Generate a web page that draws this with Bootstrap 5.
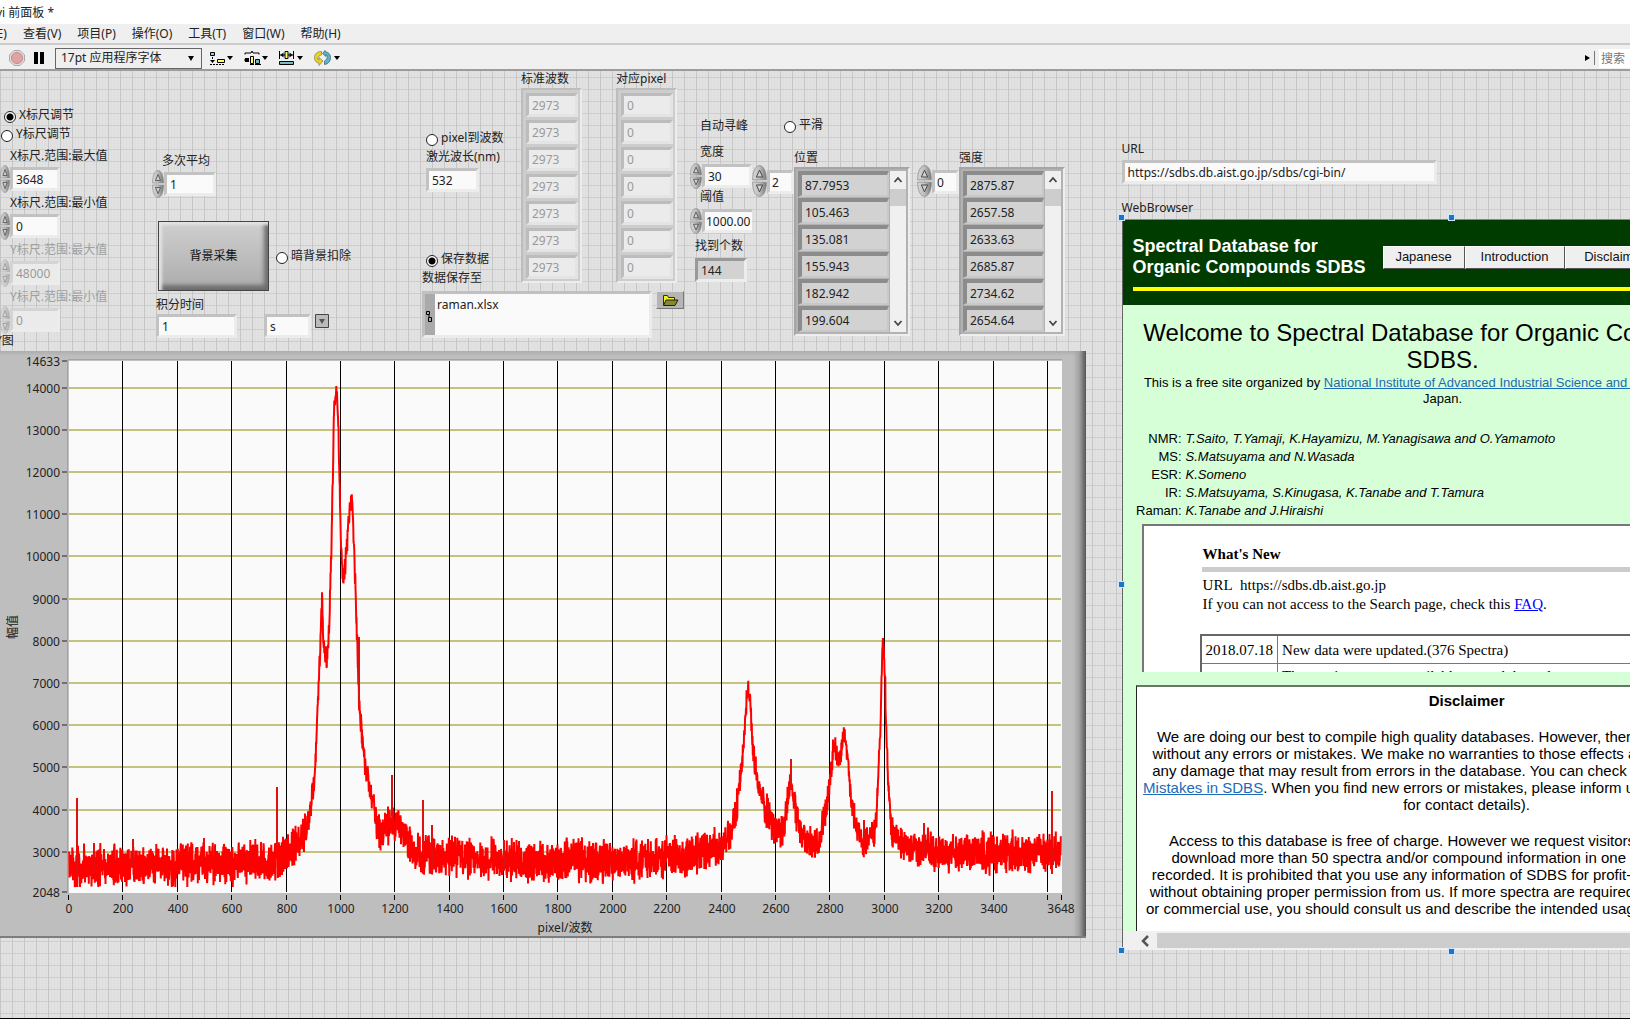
<!DOCTYPE html>
<html lang="zh-CN">
<head>
<meta charset="utf-8">
<meta name="viewport" content="width=device-width, initial-scale=1">
<title>vi 前面板</title>
<link href="https://cdn.jsdelivr.net/npm/bootstrap@5.3.0/dist/css/bootstrap.min.css" rel="stylesheet">
<style>
body{font:12px/18px "Noto Sans","Noto Sans CJK SC",sans-serif;color:#222;background:#e1e1e1;overflow:hidden}
.app{min-height:100vh;border-bottom:1px solid #000}
.titlebar{height:24px;background:#fff;color:#222;padding-top:2px}
.titlebar span{margin-left:-4px}
.menubar{height:21px;background:#efefef;gap:16px;border-bottom:2px solid #cacaca}
.menubar a{color:#222;text-decoration:none;white-space:nowrap}
.menubar a:first-child{margin-left:-31px}
.toolstrip{height:26px;padding-top:2px;background:#f0f0f0;border-bottom:2px solid #9c9c9c;gap:11px}
.toolstrip button,.plain{border:0;padding:0;background:none;line-height:0;flex:none}
.fontbox{width:147px;height:21px;border:1px solid #666;background:#efefef;padding:0 5px;font-size:12px;appearance:none;color:#222}
.fontwrap{position:relative;margin-right:-4px}
.fontwrap svg{position:absolute;right:8px;top:8px}
.find{width:31px;height:19px;border:0;background:#fff;padding:0 2px;font-size:12px}
.find::placeholder{color:#777;opacity:1}
.canvas{flex:1;background-color:#e2e2e2;
 background-image:linear-gradient(90deg,#c5c5c5 1px,transparent 1px),linear-gradient(#cdcdcd 1px,transparent 1px),linear-gradient(90deg,#dedede 1px,transparent 1px),linear-gradient(#e0e0e0 1px,transparent 1px);
 background-size:12px 12px,12px 12px,3px 3px,3px 3px;background-position:0 0,0 6px,0 0,0 0}
.leftpane{flex:none;width:66.6%;min-width:0}
.rightpane{flex:1;min-width:0;padding:69px 0 0 36px}
.controls{height:280px}
.controls>div{flex:none}
.controls label,.tag{display:block;height:18px;line-height:18px;white-space:nowrap}
.controls .fld label{margin-left:10px}
.lv{height:24px;border:3px solid;border-color:#c2c2c2 #ececec #ececec #c2c2c2;background:#fafafa;color:#222;padding:0 3px;font-size:12px;line-height:18px;border-radius:0;min-width:0;display:block}
.lv:disabled{background:#ebebeb;color:#999;border-color:#d4d4d4 #ececec #ececec #d4d4d4;opacity:1}
.dim{color:#a0a0a0}
.dim svg{opacity:.5}
.ind{background:#d2d2d2;border-color:#999 #ededed #ededed #999}
.pick{height:19px;gap:3px}
.pick input{appearance:none;width:12px;height:12px;border:1px solid #222;border-radius:50%;background:#fff;margin:5px 0 0;flex:none}
.pick input:checked{background:radial-gradient(#000 0 3px,#fff 4px)}
.fld{margin-top:3px}
.fld>div{margin-top:2px}
.fld svg{margin:-2px 0;flex:none}
.stackA{width:152px;padding-top:35px}
.stackA .pick{padding-left:1px}
.stackA .lv{width:50px}
.graphname{margin-left:-5px}
.stackB{width:270px;padding-top:81px}
.bigbtn{flex:none;width:111px;height:70px;border:1px solid #444;border-radius:0;padding:0;color:#111;font-size:12px;
 background:linear-gradient(#cfcfcf,#acacac);box-shadow:inset 3px 3px 3px #e4e4e4,inset -4px -5px 4px #6d6d6d}
.bigrow{margin:25px 0 5px 6px;gap:7px}
.w51{width:52px}.w50{width:50px}
.lv.thr{padding:0 1px;border-right-width:0}
#it{width:81px;margin-right:27px}
.unit{width:47px;margin-right:4px}
.stackC{width:268px}
.laser{width:99px;padding-top:58px}
.nm{width:53px;margin-top:2px}
.saver{margin-top:58px}
.crow{height:220px}
.arrbox{width:61px;margin-top:-1px}
.second{margin-left:34px}
.arr{background:#cdcdcd;border:2px solid;border-color:#bdbdbd #ededed #ededed #bdbdbd;padding:3px 2px 2px 3px}
.arr .lv{height:24px;margin-bottom:3px}
.arr .lv:last-child{margin-bottom:0}
.arrbox .lv{width:51px;border-color:#bcbcbc #e4e4e4 #e4e4e4 #bcbcbc}
.filebox{width:230px;height:47px;border:3px solid;border-color:#c0c0c0 #ececec #ececec #c0c0c0;background:#fafafa}
.filebox span{width:10px;background:#aaa;flex:none}
.filebox textarea{border:0;resize:none;background:none;padding:3px 2px;font-size:12px;line-height:16px;color:#222;overflow:hidden}
.folder{width:28px;height:18px;border:1px solid;border-color:#ddd #777 #777 #ddd;background:#b5b5b5;padding:0;line-height:0}
.stackF{width:62px;padding-top:46px}
.stackF .fld{margin:0}
.stackF .fld>div{margin-top:3px}
.stackF .tag{margin-left:10px}
.stackF .pk{margin-top:8px}
.stackF .cnt{padding:4px 0 0 5px}
.stackF .cnt label{margin-left:0}
.stackG{padding-top:45px}
.stackG .tag{margin-top:14px}
.stackG .pick{margin-left:-10px}
.posn{width:116px;margin-right:7px}
.inten{width:106px}
.res{background:#b2b2b2;border-color:#a5a5a5 #eee #eee #a5a5a5;padding:2px}
.res .lv{height:26px;margin-bottom:1px;background:#d2d2d2;border-color:#8c8c8c #c8c8c8 #c8c8c8 #8c8c8c;border-width:4px 2px 2px 4px;padding:0 3px}
.scr{width:16px;background:#f0f0f0;margin-left:1px}
.scr i{display:block;width:16px;height:17px;background:#cdcdcd}
.idx{padding-top:94px;width:42px}
.idx svg{flex:none}
.idx .lv{width:27px;margin-top:5px;padding:0 2px}
.chartbox{background:linear-gradient(90deg,transparent calc(100% - 13px),#a4a4a4 calc(100% - 7px),#555),linear-gradient(#adadad,#bebebe 5px);border-bottom:2px solid #7d7d7d;height:587px}
.chartbox svg{display:block;width:100%}
.urlbox{width:315px;margin:2px 0 15px}
.viewer{position:relative;border-left:1px solid #666;border-top:1px solid #888;height:731px;margin-top:2px}
.viewport{overflow:hidden;height:730px;background:#d7ffd7;font-family:"Liberation Sans",sans-serif;color:#000;font-size:13px;line-height:16px}
.sheet{width:640px;height:711px;overflow:visible}
.sheet>*{white-space:nowrap}
.hd{background:#003c00;height:85px;width:700px;padding:16px 0 0 10px}
.hd h1{color:#fff;font-size:18px;line-height:21px;font-weight:700;margin:0;width:250px}
.hd button{height:23px;border:1px solid;border-color:#fff #555 #555 #fff;background:#efefef;color:#111;font-size:13px;line-height:18px;padding:0;width:82px}
.hd button+button{width:100px}
.ybar{height:4px;background:#ff0;margin-top:9px}
.sheet h2{font-size:24px;line-height:27px;margin:0;padding:14px 0 2px;font-weight:400}
.sheet a{color:#1b6bb5}
.team{line-height:18px;margin:23px 0 4px;font-size:13px}
.team dt{width:59px;text-align:right;font-weight:400}
.team dd{margin:0 0 0 4px;font-style:italic}
.news{font:15px/19px "Liberation Serif",serif;background:#fff;border:2px solid #777;border-bottom:0;height:148px;overflow:hidden;margin-left:19px;width:600px;padding:19px 0 0 59px}
.news h3{font-size:15px;line-height:19px;margin:0;font-weight:700}
.news hr{height:5px;background:#ccc;border:0;opacity:1;margin:3px 0 4px -1px}
.news a{color:#00f}
.news table{border:2px solid #666;margin:20px 0 0 -3px;width:540px;border-collapse:collapse}
.news td{border:1px solid #777;padding:5px 4px 4px;line-height:18px}
.news tr+tr td{padding-top:3px}
.news td:first-child{width:74px}
.disc{background:#fff;border:1px solid #222;border-top-width:2px;border-color:#667766 #222 #222;border-bottom:0;width:662px;margin:13px 0 0 13px;height:247px;font-size:15px;line-height:17px;padding-top:5px}
.disc p{margin:0 0 19px}
.hbar{height:19px;background:#f0f0f0;padding-left:16px}
.hbar i{display:block;flex:1;height:15px;background:#cdcdcd;margin-left:6px}
.grip{position:absolute;width:7px;height:7px;background:#1b74c4;border:1px solid #cfe6fa}
.grip.n{top:-6px;left:325px}.grip.nw{top:-6px;left:-5px}.grip.w{top:361px;left:-5px}.grip.sw{bottom:-4px;left:-5px}.grip.s{bottom:-5px;left:325px}
</style>
<script src="https://cdn.jsdelivr.net/npm/bootstrap@5.3.0/dist/js/bootstrap.bundle.min.js"></script>
</head>
<body>
<svg width="0" height="0" class="position-absolute" aria-hidden="true">
 <defs><linearGradient id="met"><stop offset="0" stop-color="#d8d8d8"/><stop offset=".5" stop-color="#bdbdbd"/><stop offset="1" stop-color="#777"/></linearGradient></defs>
 <symbol id="spin" viewBox="0 0 12 28" preserveAspectRatio="none"><path d="M.5 13C.5 5 3 .5 6 .5s5.500 4.500 5.500 12.500zM.5 15c0 8 2.500 12.500 5.500 12.500s5.500-4.500 5.500-12.500z" fill="url(#met)" stroke="#888" stroke-width=".6"/><path d="M3.500 10.500 6 4.500l2.500 6zM3.500 17.500 6 23.500l2.500-6z" fill="#d0d0d0" stroke="#444" stroke-width=".8"/></symbol>
 <symbol id="up" viewBox="0 0 16 18"><path d="m4.500 11 3.500-4 3.500 4" fill="none" stroke="#444" stroke-width="1.800"/></symbol>
 <symbol id="dn" viewBox="0 0 16 18"><path d="m4.500 7 3.500 4 3.500-4" fill="none" stroke="#444" stroke-width="1.800"/></symbol>
</svg>
<div class="app d-flex flex-column">
 <header>
  <div class="titlebar d-flex align-items-center"><span>vi 前面板 *</span></div>
  <nav class="menubar d-flex align-items-center"><a href="#">编辑(E)</a><a href="#">查看(V)</a><a href="#">项目(P)</a><a href="#">操作(O)</a><a href="#">工具(T)</a><a href="#">窗口(W)</a><a href="#">帮助(H)</a></nav>
  <div class="toolstrip d-flex align-items-center ps-2">
   <div class="d-flex gap-2 align-items-center">
   <button aria-label="中止"><svg width="18" height="18"><path d="M6 1.500h6L16.500 6v6L12 16.500H6L1.500 12V6z" fill="#ddd" stroke="#aaa"/><circle cx="9" cy="9" r="5.500" fill="#e0a3a3" stroke="#c98888"/></svg></button>
   <button aria-label="暂停"><svg width="10" height="12"><path d="M0 0h4v12H0zM6 0h4v12H6z" fill="#000"/></svg></button></div>
   <div class="fontwrap"><select class="fontbox" aria-label="字体"><option>17pt 应用程序字体</option></select><svg width="6" height="5"><path d="M0 0h6L3 5z"/></svg></div>
   <button aria-label="对齐"><svg width="24" height="16"><path d="M1.500 2.500h4v3h-4z" fill="#9cc" stroke="#000"/><path d="M3.500 7v4M1 14.500h5M7 14.500h9" stroke="#000" stroke-dasharray="2 1"/><path d="m1 10h5l-2.500 3z"/><path d="M8.500 9.500h7v3h-7z" fill="#ff6" stroke="#000"/><path d="M18 6h6l-3 4z"/></svg></button>
   <button aria-label="分布"><svg width="24" height="16"><path d="M1 4.500V3h6l1-2 1 2h6v1.500M0 10h4M11 14.500h6M6 14.500h4" fill="none" stroke="#000"/><path d="M1 8h4v4H1z"/><path d="M6.500 6.500h3v7h-3z" fill="#ff6" stroke="#000"/><path d="M11.500 9.500h4v4h-4z" fill="#7bb" stroke="#000"/><path d="M18 6h6l-3 4z"/></svg></button>
   <button aria-label="调整大小"><svg width="24" height="16"><path d="M.500 1v8M14.500 1v8M1 5h13" stroke="#000"/><path d="M4.500 2.500v5L1.500 5zM10.500 2.500v5l3-2.500z"/><path d="M6 1.500h3v7H6z" fill="#ff6" stroke="#000"/><path d="M.500 11.500h14v3H.500z" fill="#7bb" stroke="#000"/><path d="M18 6h6l-3 4z"/></svg></button>
   <button aria-label="重新排序"><svg width="26" height="16"><path d="M7.500 1.500C3 1.500.5 4 .5 7.500S2.500 13 5 13v2.500L9 11 5 7.500V10c-2 0-1.500-4.500 2.500-5z" fill="#ecd21e" stroke="#886" stroke-width=".8"/><path d="M11 .5 8.500 3.500l3.500 3V4.500c2 1 1.500 5-1.500 6.500v3.500c4-.5 6-3.500 6-7S14 2 11.500 2z" fill="#5ab4cc" stroke="#467" stroke-width=".8"/><path d="M20 6h6l-3 4z"/></svg></button>
   <div class="ms-auto d-flex align-items-center gap-1"><svg width="5" height="8"><path d="M0 1v6l5-3z"/></svg><svg width="1" height="14"><path d="M0 0h1v14H0z" fill="#777"/></svg><input class="find" aria-label="搜索" placeholder="搜索"></div>
  </div>
 </header>
 <main class="canvas d-flex align-items-start">
  <section class="leftpane">
   <div class="controls d-flex">
    <div class="stackA">
     <div class="pick d-flex ps-1"><input type="radio" name="ax" id="axx" checked><label for="axx">X标尺调节</label></div>
     <div class="pick d-flex"><input type="radio" name="ax" id="axy"><label for="axy">Y标尺调节</label></div>
     <div class="fld"><label for="x1">X标尺.范围:最大值</label><div class="d-flex align-items-center"><svg width="10" height="28"><use href="#spin"/></svg><input class="lv" id="x1" value="3648"></div></div>
     <div class="fld"><label for="x2">X标尺.范围:最小值</label><div class="d-flex align-items-center"><svg width="10" height="28"><use href="#spin"/></svg><input class="lv" id="x2" value="0"></div></div>
     <div class="fld dim"><label for="y1">Y标尺.范围:最大值</label><div class="d-flex align-items-center"><svg width="10" height="28"><use href="#spin"/></svg><input class="lv" id="y1" value="48000" disabled></div></div>
     <div class="fld dim"><label for="y2">Y标尺.范围:最小值</label><div class="d-flex align-items-center"><svg width="10" height="28"><use href="#spin"/></svg><input class="lv" id="y2" value="0" disabled></div></div>
     <div class="tag graphname">Y图</div>
    </div>
    <div class="stackB">
     <div class="fld m-0"><label for="avg">多次平均</label><div class="d-flex align-items-center"><svg width="12" height="28"><use href="#spin"/></svg><input class="lv w51" id="avg" value="1"></div></div>
     <div class="bigrow d-flex align-items-center"><button class="bigbtn">背景采集</button><div class="pick d-flex"><input type="radio" id="dark"><label for="dark">暗背景扣除</label></div></div>
     <div class="ps-1">
      <label for="it">积分时间</label>
      <div class="d-flex"><input class="lv" id="it" value="1"><input class="lv unit" aria-label="单位" value="s"><button class="plain align-self-start" aria-label="选择单位"><svg width="14" height="14"><path d="M.5.500h13v13H.5z" fill="#bbb" stroke="#444"/><path d="M4 5h6l-3 5z" fill="#555"/></svg></button></div>
     </div>
    </div>
    <div class="stackC">
     <div class="d-flex crow">
      <div class="laser">
       <div class="pick d-flex ps-1"><input type="radio" id="p2w"><label for="p2w">pixel到波数</label></div>
       <div class="ps-1"><label for="nm">激光波长(nm)</label><input class="lv nm" id="nm" value="532"></div>
       <div class="pick d-flex ps-1 saver"><input type="radio" id="sv" checked><label for="sv">保存数据</label></div>
       <label for="path">数据保存至</label>
      </div>
      <div class="arrbox"><span class="tag">标准波数</span><div class="arr" data-list="2973,2973,2973,2973,2973,2973,2973" data-name="标准波数"></div></div>
      <div class="arrbox second"><span class="tag">对应pixel</span><div class="arr" data-list="0,0,0,0,0,0,0" data-name="对应pixel"></div></div>
     </div>
     <div class="d-flex gap-1"><div class="filebox d-flex"><span><svg width="8" height="14" class="mt-3"><path d="M1.500 1.500h3v3h-3zM4 7v-2M3.500 7.500h3v4h-3z" fill="none" stroke="#000"/></svg></span><textarea id="path" class="w-100">raman.xlsx</textarea></div>
     <button class="folder" aria-label="浏览"><svg width="18" height="14"><path d="M2.500 12V2.500h4l1 2h6V7" fill="#ee3" stroke="#330"/><path d="M2.500 12.500 5 7h12l-3 5.500z" fill="#883" stroke="#220"/></svg></button></div>
    </div>
    <div class="stackF">
     <div class="fld"><span class="tag">自动寻峰</span></div>
     <div class="fld pk"><label for="wd">宽度</label><div class="d-flex align-items-center"><svg width="12" height="26"><use href="#spin"/></svg><input class="lv w50" id="wd" value="30"></div></div>
     <div class="fld"><label for="th">阈值</label><div class="d-flex align-items-center"><svg width="12" height="26"><use href="#spin"/></svg><input class="lv w50 thr" id="th" value="1000.00"></div></div>
     <div class="fld cnt"><label for="ct">找到个数</label><div><input class="lv ind w51" id="ct" value="144" readonly></div></div>
    </div>
    <div class="idx d-flex"><svg width="15" height="32"><use href="#spin"/></svg><input class="lv" aria-label="位置索引" value="2"></div>
    <div class="stackG posn">
     <div class="pick d-flex"><input type="radio" id="sm"><label for="sm">平滑</label></div>
     <span class="tag">位置</span>
     <div class="arr res d-flex"><div class="flex-fill" data-list="87.7953,105.463,135.081,155.943,182.942,199.604" data-name="位置"></div><div class="scr d-flex flex-column"><svg width="16" height="18"><use href="#up"/></svg><i></i><svg width="16" height="18" class="mt-auto"><use href="#dn"/></svg></div></div>
    </div>
    <div class="idx d-flex"><svg width="15" height="32"><use href="#spin"/></svg><input class="lv" aria-label="强度索引" value="0"></div>
    <div class="stackG inten">
     <div class="pick"></div>
     <span class="tag">强度</span>
     <div class="arr res d-flex"><div class="flex-fill" data-list="2875.87,2657.58,2633.63,2685.87,2734.62,2654.64" data-name="强度"></div><div class="scr d-flex flex-column"><svg width="16" height="18"><use href="#up"/></svg><i></i><svg width="16" height="18" class="mt-auto"><use href="#dn"/></svg></div></div>
    </div>
   </div>
   <div class="chartbox" id="chart"></div>
  </section>
  <section class="rightpane">
   <label for="url" class="tag">URL</label>
   <input class="lv urlbox" id="url" value="https://sdbs.db.aist.go.jp/sdbs/cgi-bin/">
   <span class="tag">WebBrowser</span>
   <div class="viewer">
    <div class="viewport">
     <div class="sheet">
      <div class="hd"><div class="d-flex align-items-center"><h1>Spectral Database for<br>Organic Compounds SDBS</h1><button>Japanese</button><button>Introduction</button><button>Disclaimer</button></div><div class="ybar"></div></div>
      <h2 class="text-center">Welcome to Spectral Database for Organic Compounds,<br>SDBS.</h2>
      <div class="text-center">This is a free site organized by <a href="#">National Institute of Advanced Industrial Science and Technology (AIST)</a>,<br>Japan.</div>
      <dl class="team">
       <div class="d-flex"><dt>NMR:</dt><dd>T.Saito, T.Yamaji, K.Hayamizu, M.Yanagisawa and O.Yamamoto</dd></div>
       <div class="d-flex"><dt>MS:</dt><dd>S.Matsuyama and N.Wasada</dd></div>
       <div class="d-flex"><dt>ESR:</dt><dd>K.Someno</dd></div>
       <div class="d-flex"><dt>IR:</dt><dd>S.Matsuyama, S.Kinugasa, K.Tanabe and T.Tamura</dd></div>
       <div class="d-flex"><dt>Raman:</dt><dd>K.Tanabe and J.Hiraishi</dd></div>
      </dl>
      <div class="news"><h3>What's New</h3><hr>URL&nbsp; https://sdbs.db.aist.go.jp<br>If you can not access to the Search page, check this <a href="#">FAQ</a>.
       <table><tr><td>2018.07.18</td><td>New data were updated.(376 Spectra)</td></tr><tr><td></td><td>The service was not available around these days.</td></tr></table></div>
      <div class="disc text-center">
       <p class="fw-bold">Disclaimer</p>
       <p>We are doing our best to compile high quality databases. However, there are no databases at<br>without any errors or mistakes. We make no warranties to those effects and are not liable for it,<br>any damage that may result from errors in the database. You can check the known errors list in<br><a href="#">Mistakes in SDBS</a>. When you find new errors or mistakes, please inform us (see the contact page<br>for contact details).</p>
       <p>Access to this database is free of charge. However we request visitors to our SDBS not to<br>download more than 50 spectra and/or compound information in one day. Access is to be<br>recorded. It is prohibited that you use any information of SDBS for profit-making purposes, also<br>without obtaining proper permission from us. If more spectra are required for your own research<br>or commercial use, you should consult us and describe the intended usage of all our SDBS data.</p>
      </div>
     </div>
     <div class="hbar d-flex align-items-center"><svg width="12" height="14"><path d="M9 2 4 7l5 5" fill="none" stroke="#555" stroke-width="2.500"/></svg><i></i></div>
    </div>
    <span class="grip nw"></span><span class="grip n"></span><span class="grip w"></span><span class="grip sw"></span><span class="grip s"></span>
   </div>
  </section>
 </main>
</div>
<script>
document.querySelectorAll('[data-list]').forEach(box=>{
 const dis=!box.closest('.res');
 box.dataset.list.split(',').forEach((v,i)=>{
  const e=document.createElement('input');e.className='lv w-100';e.value=v;
  e.setAttribute('aria-label',box.dataset.name+' '+(i+1));
  if(dis)e.disabled=true;else e.readOnly=true;
  box.append(e);
 });
});
// Spectrum: centre line of the trace, [x, y] in plot units
const line=[[69,868],[200,864],[270,862],[282,857],[295,848],[303,834],[308,824],[311,806],[315,770],[317,725],[319,680],[321,620],[322,600],[323,630],[325,655],[327,662],[329,630],[331,560],[333,470],[334,415],[336,396],[338,412],[340,500],[341,550],[343,582],[345,570],[348,530],[350,505],[352,496],[353,522],[355,570],[357,640],[359,700],[362,735],[365,765],[370,790],[375,815],[381,836],[386,828],[392,822],[398,824],[403,830],[410,850],[420,856],[500,860],[560,861],[640,860],[690,856],[715,850],[725,842],[733,825],[738,800],[743,750],[746,705],[748,692],[750,700],[753,750],[758,785],[766,810],[775,828],[780,834],[785,822],[788,800],[791,778],[793,795],[799,825],[808,845],[815,846],[821,835],[828,800],[833,750],[835,747],[838,758],[841,755],[844,730],[847,750],[851,800],[857,832],[865,842],[873,838],[877,810],[880,740],[882,660],[883,632],[885,680],[888,780],[892,830],[900,842],[920,848],[940,855],[980,853],[1061,853]];
const spikes=[[77,798],[94,843],[133,839],[204,838],[277,787],[359,637],[392,775],[423,800],[432,825],[504,840],[768,798],[791,759],[864,820],[924,823],[1052,791]];
let seed=11;const rnd=()=>(seed=(seed*16807)%2147483647)/2147483647;
const pts=[],step=.25;let k=0;
for(let x=69;x<1061;x+=step){
 while(k<line.length-2&&x>line[k+1][0])k++;
 const a=line[k],b=line[k+1],t=(x-a[0])/(b[0]-a[0]),y=a[1]+(b[1]-a[1])*t;
 const amp=y>846?13:y>800?11:8,r=(rnd()-.5)*1.400+(rnd()-.5)*.8;
 pts.push([x,Math.min(887,y+r*amp*1.700)]);
}
function draw(){
 const box=document.getElementById('chart'),W=box.clientWidth,x0=69,pw=W-94,top=351;
 const X=v=>x0+v*pw/3648,Y=v=>892-top-(v-2048)*.0422,P=p=>x0+(p-69)*pw/992;
 let s=`<svg height="585" font-size="12" fill="#222"><rect x="68" y="9" width="${pw+2}" height="533" fill="#fafafa"/><path d="M68 542V9h${pw+2}" stroke="#888" fill="none"/>`;
 for(let v=3000;v<=14000;v+=1000)s+=`<path d="M69 ${Math.round(Y(v))}h${pw}" stroke="#c3c37f" stroke-width="2"/>`;
 for(let v=200;v<=3600;v+=200)s+=`<path d="M${Math.round(X(v))-.5} 10V541" stroke="#000"/>`;
 const yt=[2048];for(let v=3000;v<=14000;v+=1000)yt.push(v);yt.push(14633);
 yt.forEach(v=>s+=`<text x="60" y="${Math.round(Y(v))+5}" text-anchor="end">${v}</text><path d="M62 ${Math.round(Y(v))}h5" stroke="#222" stroke-width="1"/>`);
 for(let v=0;v<=3648;v+=200){s+=`<path d="M${Math.round(X(v))-.5} 544v5" stroke="#000"/>`;if(v<3600)s+=`<text x="${Math.round(X(v))}" y="562" text-anchor="middle">${v}</text>`}
 s+=`<path d="M${W-25}.5 544v5" stroke="#000"/><text x="${W-25}" y="562" text-anchor="middle">3648</text>`;
 s+=`<path fill="none" stroke="#f00" stroke-width="2" stroke-linejoin="bevel" d="M${pts.map(p=>P(p[0]).toFixed(1)+' '+(p[1]-top).toFixed(1)).join('L')}"/>`;
 spikes.forEach(p=>s+=`<path d="M${P(p[0]).toFixed(1)} ${p[1]-top}V${(pts[Math.floor((p[0]-69)/step)][1]-top).toFixed(1)}" stroke="#e01010" stroke-width="2"/>`);
 s+=`<text x="${Math.round(x0+pw/2)}" y="581" text-anchor="middle">pixel/波数</text><text transform="translate(17 276) rotate(-90)" text-anchor="middle">幅值</text></svg>`;
 box.innerHTML=s;
}
draw();addEventListener('resize',draw);
</script>
</body>
</html>
